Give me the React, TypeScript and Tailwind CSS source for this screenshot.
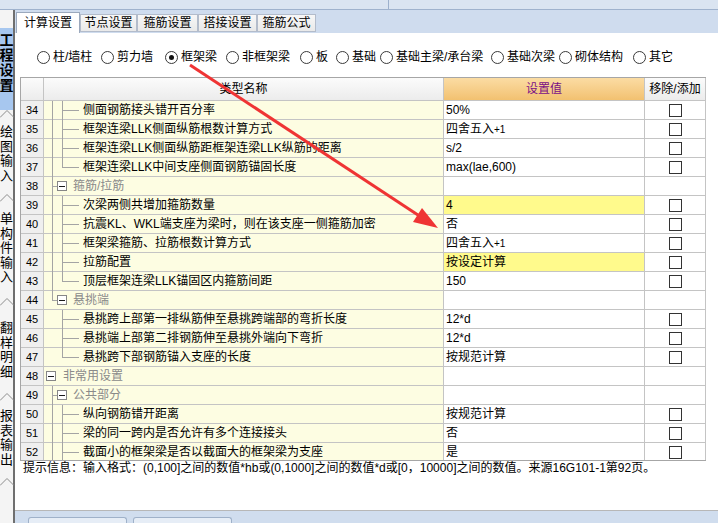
import React from 'react';

type Row = {
  n: number;
  label: string;
  kind: 'leaf' | 'group' | 'root';
  a52?: 'full' | 'half';
  a62?: 'full' | 'half';
  value?: React.ReactNode;
  yellow?: boolean;
  check?: boolean;
};

const rounding = (
  <>
    <span>四舍五入</span>
    <span className="text-[10px]">+1</span>
  </>
);

const rows: Row[] = [
  { n: 34, label: '侧面钢筋接头错开百分率', kind: 'leaf', a52: 'full', a62: 'full', value: '50%', check: true },
  { n: 35, label: '框架连梁LLK侧面纵筋根数计算方式', kind: 'leaf', a52: 'full', a62: 'full', value: rounding, check: true },
  { n: 36, label: '框架连梁LLK侧面纵筋距框架连梁LLK纵筋的距离', kind: 'leaf', a52: 'full', a62: 'full', value: 's/2', check: true },
  { n: 37, label: '框架连梁LLK中间支座侧面钢筋锚固长度', kind: 'leaf', a52: 'full', a62: 'half', value: 'max(lae,600)', check: true },
  { n: 38, label: '箍筋/拉筋', kind: 'group', a52: 'full' },
  { n: 39, label: '次梁两侧共增加箍筋数量', kind: 'leaf', a52: 'full', a62: 'full', value: '4', yellow: true, check: true },
  { n: 40, label: '抗震KL、WKL端支座为梁时，则在该支座一侧箍筋加密', kind: 'leaf', a52: 'full', a62: 'full', value: '否', check: true },
  { n: 41, label: '框架梁箍筋、拉筋根数计算方式', kind: 'leaf', a52: 'full', a62: 'full', value: rounding, check: true },
  { n: 42, label: '拉筋配置', kind: 'leaf', a52: 'full', a62: 'full', value: '按设定计算', yellow: true, check: true },
  { n: 43, label: '顶层框架连梁LLK锚固区内箍筋间距', kind: 'leaf', a52: 'full', a62: 'half', value: '150', check: true },
  { n: 44, label: '悬挑端', kind: 'group', a52: 'half' },
  { n: 45, label: '悬挑跨上部第一排纵筋伸至悬挑跨端部的弯折长度', kind: 'leaf', a62: 'full', value: '12*d', check: true },
  { n: 46, label: '悬挑端上部第二排钢筋伸至悬挑外端向下弯折', kind: 'leaf', a62: 'full', value: '12*d', check: true },
  { n: 47, label: '悬挑跨下部钢筋锚入支座的长度', kind: 'leaf', a62: 'half', value: '按规范计算', check: true },
  { n: 48, label: '非常用设置', kind: 'root' },
  { n: 49, label: '公共部分', kind: 'group', a52: 'full' },
  { n: 50, label: '纵向钢筋错开距离', kind: 'leaf', a52: 'full', a62: 'full', value: '按规范计算', check: true },
  { n: 51, label: '梁的同一跨内是否允许有多个连接接头', kind: 'leaf', a52: 'full', a62: 'full', value: '否', check: true },
  { n: 52, label: '截面小的框架梁是否以截面大的框架梁为支座', kind: 'leaf', a52: 'full', a62: 'full', value: '是', check: true },
];

const radios = [
  { label: '柱/墙柱', w: 'w-[64px]' },
  { label: '剪力墙', w: 'w-[64px]' },
  { label: '框架梁', w: 'w-[61px]', on: true },
  { label: '非框架梁', w: 'w-[74px]' },
  { label: '板', w: 'w-[36px]' },
  { label: '基础', w: 'w-[44px]' },
  { label: '基础主梁/承台梁', w: 'w-[111px]' },
  { label: '基础次梁', w: 'w-[68px]' },
  { label: '砌体结构', w: 'w-[74px]' },
  { label: '其它', w: 'w-[50px]' },
];

const tabs = [
  { label: '计算设置', w: 'w-[64px]', active: true },
  { label: '节点设置', w: 'w-[57px]' },
  { label: '箍筋设置', w: 'w-[61px]' },
  { label: '搭接设置', w: 'w-[59px]' },
  { label: '箍筋公式', w: 'w-[59px]' },
];

const sideTabs = [
  { label: '绘图输入', h: 'h-[84px]', pt: 'pt-[7px]' },
  { label: '单构件输入', h: 'h-[104px]', pt: 'pt-[10px]' },
  { label: '翻样明细', h: 'h-[95px]', pt: 'pt-[15px]' },
  { label: '报表输出', h: 'h-[85px]', pt: 'pt-[8px]' },
];

function Roof() {
  return (
    <svg width="14" height="8" className="block">
      <polyline points="0,7.5 7,0.5 14,7.5" fill="none" stroke="#8c8c8c" />
    </svg>
  );
}

function TreeGlyph({ row }: { row: Row }) {
  const c = '#a4a4a4';
  return (
    <svg width="40" height="19" className="absolute left-0 top-0">
      {row.a52 === 'full' && <line x1="8.5" y1="0" x2="8.5" y2="19" stroke={c} />}
      {row.a52 === 'half' && <line x1="8.5" y1="0" x2="8.5" y2="9.5" stroke={c} />}
      {row.a62 === 'full' && <line x1="18.5" y1="0" x2="18.5" y2="19" stroke={c} />}
      {row.a62 === 'half' && <line x1="18.5" y1="0" x2="18.5" y2="9.5" stroke={c} />}
      {row.kind === 'leaf' && <line x1="18" y1="9.5" x2="35" y2="9.5" stroke={c} />}
      {row.kind === 'group' && (
        <>
          <line x1="8" y1="9.5" x2="13" y2="9.5" stroke={c} />
          <rect x="13.5" y="4.5" width="9" height="9" fill="#fff" stroke="#868686" />
          <line x1="15" y1="9.5" x2="21" y2="9.5" stroke="#1a1a1a" />
        </>
      )}
      {row.kind === 'root' && (
        <>
          <rect x="2.5" y="4.5" width="9" height="9" fill="#fff" stroke="#868686" />
          <line x1="4" y1="9.5" x2="10" y2="9.5" stroke="#1a1a1a" />
        </>
      )}
    </svg>
  );
}

function TableRow({ row }: { row: Row }) {
  const textPad = row.kind === 'leaf' ? 'pl-[39px] text-black' : row.kind === 'group' ? 'pl-[29px] text-[#8a8a8a]' : 'pl-[19px] text-[#8a8a8a]';
  return (
    <div className="flex h-[19px] text-[12px] leading-[18px]">
      <div className="w-[23px] shrink-0 border-r border-b border-[#c4c4c4] bg-[#efefef] text-center text-[11px]">{row.n}</div>
      <div className={`relative w-[400px] shrink-0 whitespace-nowrap border-r border-b border-[#c4c4c4] bg-[#fdfde2] ${textPad}`}>
        <TreeGlyph row={row} />
        {row.label}
      </div>
      <div className={`w-[201px] shrink-0 whitespace-nowrap border-r border-b border-[#c4c4c4] pl-[2px] ${row.yellow ? 'bg-[#fffa8c]' : 'bg-white'}`}>
        {row.value}
      </div>
      <div className="flex w-[61px] shrink-0 items-center justify-center border-r border-b border-[#c4c4c4] bg-white">
        {row.check && <div className="h-[13px] w-[13px] border border-[#333] bg-white" />}
      </div>
    </div>
  );
}

export default function App() {
  return (
    <div className="relative h-[523px] w-[718px] overflow-hidden bg-[#d6e2f0] font-['Liberation_Sans','Noto_Sans_CJK_SC',sans-serif] text-black">
      {/* title strip */}
      <div className="flex h-[10px] overflow-hidden border-b border-[#9fb2cd] bg-[#dae4f1]">
        <div className="ml-[388px] h-full border-l border-[#9cb0cc]" />
      </div>

      <div className="flex h-[513px]">
        {/* side tabs */}
        <div className="flex w-[15px] shrink-0 flex-col border-r-2 border-[#6f6f6f] bg-[#f4f4f4]">
          <div className="h-[18px]" />
          <div className="flex h-[82px] flex-col items-center bg-[#a7c7ef] pt-[5px] text-[14px] font-bold leading-[15px]">
            {'工程设置'.split('').map((ch) => (
              <span key={ch}>{ch}</span>
            ))}
          </div>
          {sideTabs.map((t) => (
            <div key={t.label} className={`${t.h} flex flex-col items-center`}>
              <Roof />
              <div className={`flex flex-col items-center text-[13px] leading-[14.5px] ${t.pt}`}>
                {t.label.split('').map((ch, i) => (
                  <span key={i}>{ch}</span>
                ))}
              </div>
            </div>
          ))}
          <Roof />
        </div>

        {/* main panel */}
        <div className="flex flex-1 flex-col">
          <div className="flex h-[23px] items-end bg-[#cfdcee] pl-[1px]">
            {tabs.map((t) =>
              t.active ? (
                <div key={t.label} className={`${t.w} flex h-[21px] items-center justify-center border border-b-0 border-[#9ba9bd] bg-white text-[12px]`}>
                  {t.label}
                </div>
              ) : (
                <div key={t.label} className={`${t.w} mb-[1px] flex h-[18px] items-center justify-center border border-[#b3bccb] bg-gradient-to-b from-[#f7f7f7] to-[#e9e9e9] text-[12px]`}>
                  {t.label}
                </div>
              )
            )}
          </div>

          <div className="flex h-[477px] flex-col bg-white">
            <div className="flex h-[18px] items-center pl-[22px] mt-[15px] text-[12px]">
              {radios.map((r) => (
                <div key={r.label} className={`${r.w} flex shrink-0 items-center`}>
                  <div className="mr-[3px] flex h-[13px] w-[13px] items-center justify-center rounded-full border border-[#3a3a3a] bg-white">
                    {r.on && <div className="h-[5px] w-[5px] rounded-full bg-[#111]" />}
                  </div>
                  <span className="whitespace-nowrap">{r.label}</span>
                </div>
              ))}
            </div>

            <div className="ml-[5px] mt-[11px] h-[384px] w-[686px] overflow-hidden border-l border-t border-b border-[#a6a6a6]">
              <div className="flex h-[23px] text-[12px]">
                <div className="w-[23px] border-r border-b border-[#c4c4c4] bg-gradient-to-b from-[#fbfbfb] to-[#ececec]" />
                <div className="flex w-[400px] items-center justify-center border-r border-b border-[#c4c4c4] bg-gradient-to-b from-[#fbfbfb] to-[#ececec]">
                  类型名称
                </div>
                <div className="flex w-[201px] items-center justify-center border-r border-b border-[#c4c4c4] bg-gradient-to-b from-[#fbdca3] to-[#f2c170] text-[#7a0f86]">
                  设置值
                </div>
                <div className="flex w-[61px] items-center justify-center whitespace-nowrap border-r border-b border-[#c4c4c4] bg-gradient-to-b from-[#fbfbfb] to-[#ececec]">
                  移除/添加
                </div>
              </div>
              {rows.map((r) => (
                <TableRow key={r.n} row={r} />
              ))}
            </div>

            <div className="whitespace-nowrap pl-[8px] text-[12px] leading-[14px]">
              提示信息：输入格式：(0,100]之间的数值*hb或(0,1000]之间的数值*d或[0，10000]之间的数值。来源16G101-1第92页。
            </div>
          </div>

          <div className="flex h-[13px] gap-[6px] border-t border-[#b7b7b7] bg-[#d0ddee] pl-[13px] pt-[6px]">
            <div className="h-[10px] w-[99px] rounded-t-[3px] border border-b-0 border-[#9fb1c9] bg-[#e6edf6]" />
            <div className="h-[10px] w-[99px] rounded-t-[3px] border border-b-0 border-[#9fb1c9] bg-[#e6edf6]" />
          </div>
        </div>
      </div>

      {/* red annotation arrow */}
      <svg width="718" height="523" className="pointer-events-none absolute left-0 top-0">
        <line x1="190" y1="65" x2="421" y2="217" stroke="#ef3434" strokeWidth="3" />
        <polygon points="438,228 413,222 422,208" fill="#ef3434" />
      </svg>
    </div>
  );
}
